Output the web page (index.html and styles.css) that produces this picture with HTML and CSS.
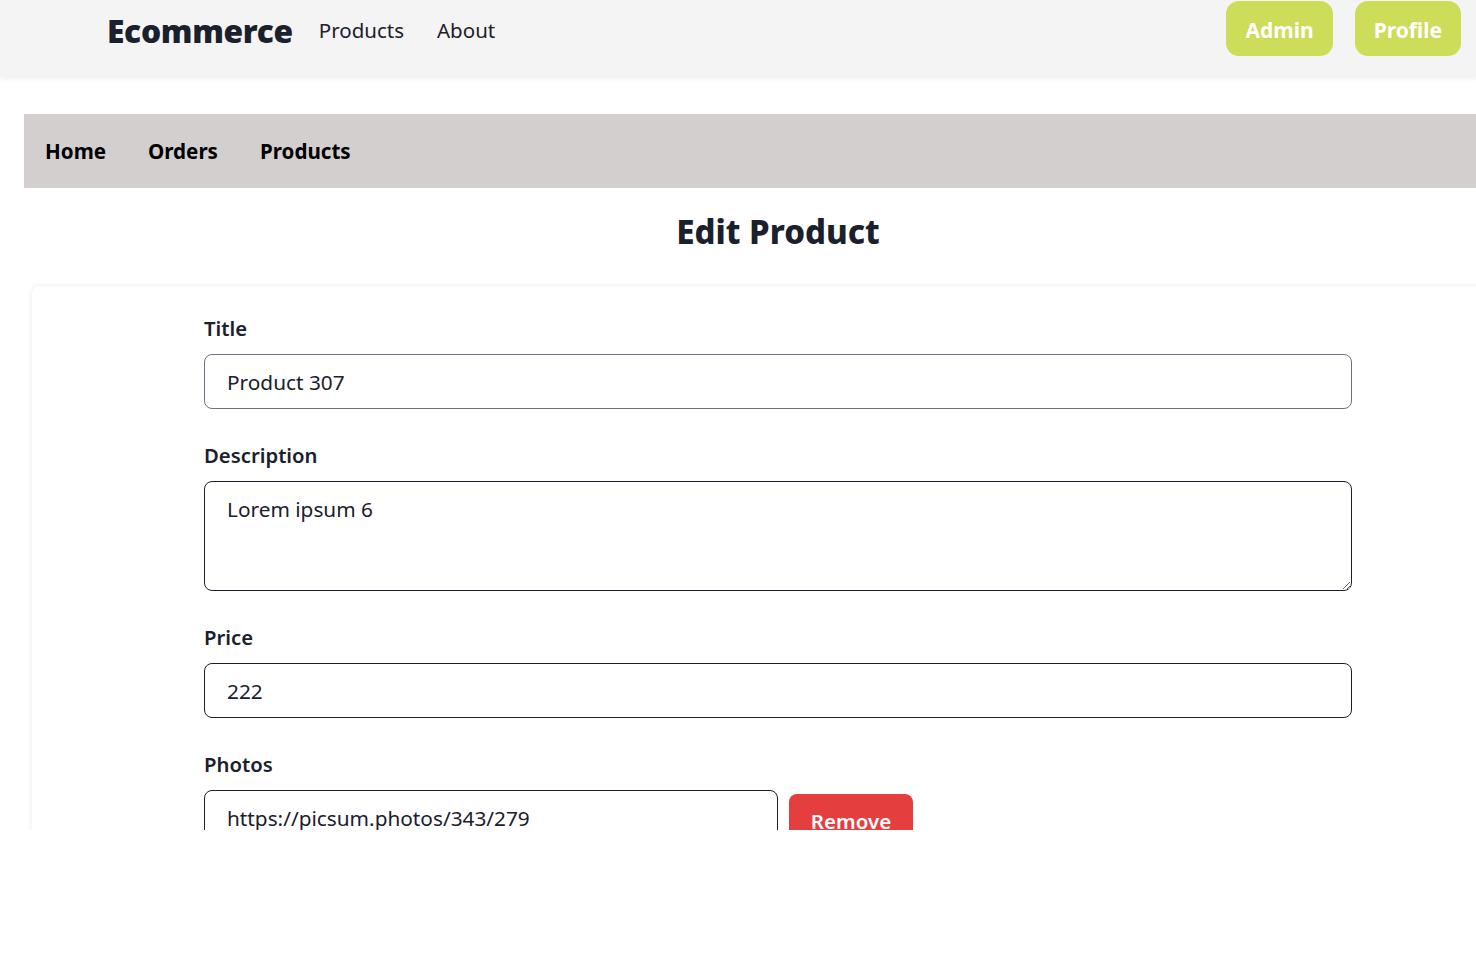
FILE: index.html
```html
<!DOCTYPE html>
<html lang="en">
<head>
<meta charset="utf-8">
<title>Ecommerce - Edit Product</title>
<link rel="stylesheet" href="styles.css">
</head>
<body>
<header class="topbar">
  <div class="brand-group">
    <span class="brand">Ecommerce</span>
    <nav class="topnav">
      <a class="topnav-link">Products</a>
      <a class="topnav-link">About</a>
    </nav>
  </div>
  <div class="actions">
    <button class="pill">Admin</button>
    <button class="pill">Profile</button>
  </div>
</header>
<div class="viewport">
  <main class="main">
    <nav class="subnav">
      <a class="subnav-link">Home</a>
      <a class="subnav-link">Orders</a>
      <a class="subnav-link">Products</a>
    </nav>
    <h1 class="page-title">Edit Product</h1>
    <section class="card">
      <form class="form">
        <div class="field">
          <label class="label">Title</label>
          <input class="input input-muted" type="text" value="Product 307">
        </div>
        <div class="field">
          <label class="label">Description</label>
          <textarea class="input textarea">Lorem ipsum 6</textarea>
        </div>
        <div class="field">
          <label class="label">Price</label>
          <input class="input" type="text" value="222">
        </div>
        <div class="field">
          <label class="label">Photos</label>
          <div class="photo-row">
            <input class="input photo-input" type="text" value="https://picsum.photos/343/279">
            <button type="button" class="remove">Remove</button>
          </div>
        </div>
      </form>
    </section>
  </main>
</div>
</body>
</html>
```

FILE: styles.css
```css
* { box-sizing: border-box; }
html, body {
  margin: 0;
  padding: 0;
  overflow: hidden;
  background: #ffffff;
}
body {
  font-family: "Noto Sans", "Open Sans", sans-serif;
  color: #1a202c;
  width: 1476px;
  height: 966px;
}
.topbar {
  height: 76px;
  background: #f4f4f4;
  box-shadow: 0 2px 6px rgba(0,0,0,0.08);
  display: flex;
  justify-content: space-between;
  align-items: flex-start;
  padding: 0 15px 0 107px;
  position: relative;
  z-index: 2;
}
.brand-group {
  display: flex;
  align-items: center;
  height: 60px;
}
.brand {
  font-size: 31.7px;
  font-weight: 900;
  color: #1a202c;
  letter-spacing: -0.3px;
  margin-right: 26px;
}
.topnav { display: flex; gap: 33px; }
.topnav-link {
  font-size: 20.5px;
  color: #1a202c;
}
.actions {
  display: flex;
  gap: 22px;
  padding-top: 1px;
}
.pill {
  height: 55px;
  padding: 3px 19px 0;
  border: none;
  border-radius: 13px;
  background: #cddc59;
  color: #ffffff;
  font-family: inherit;
  font-size: 21px;
  font-weight: 700;
  line-height: 1;
}
.viewport {
  height: 754px;
  overflow: hidden;
}
.main {
  margin: 38px 0 0 24px;
  width: 1508px;
}
.subnav {
  background: #d3cfcf;
  height: 74px;
  display: flex;
  align-items: center;
  gap: 42px;
  padding-left: 21px;
}
.subnav-link {
  font-size: 20.6px;
  font-weight: 700;
  color: #000000;
}
.page-title {
  margin: 21px 0 0;
  text-align: center;
  font-size: 33px;
  font-weight: 800;
  color: #1a202c;
  line-height: 46px;
}
.card {
  margin: 31px 8px 0;
  border-radius: 8px;
  box-shadow: 0 0 6px rgba(0,0,0,0.09);
  padding: 28px 172px 60px;
  background: #ffffff;
}
.form {
  display: flex;
  flex-direction: column;
  gap: 32px;
}
.field {
  display: flex;
  flex-direction: column;
  gap: 12px;
}
.label {
  font-size: 20.3px;
  font-weight: 600;
  line-height: 28px;
  color: #1a202c;
}
.input {
  height: 55px;
  width: 100%;
  border: 1px solid #1a202c;
  border-radius: 8px;
  padding: 0 22px;
  font-family: inherit;
  font-size: 20.8px;
  color: #1a202c;
  background: #ffffff;
}
.input-muted { border-color: #6b7280; }
.textarea {
  height: 110px;
  padding-top: 12px;
  resize: vertical;
  line-height: 30px;
}
.photo-row {
  display: flex;
  align-items: flex-start;
  gap: 11px;
}
.photo-input { width: 574px; }
.remove {
  margin-top: 4px;
  height: 54px;
  width: 124px;
  padding: 0;
  border: none;
  border-radius: 8px;
  background: #e53e3e;
  color: #ffffff;
  font-family: inherit;
  font-size: 20.5px;
  font-weight: 600;
}
```
